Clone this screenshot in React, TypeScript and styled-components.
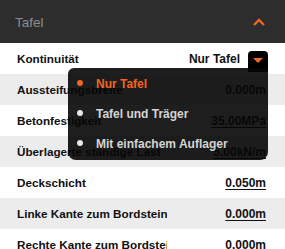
import React, {FC} from "react";
import styled, {createGlobalStyle} from "styled-components";

const GlobalStyle = createGlobalStyle`
	html, body {
		margin: 0;
		padding: 0;
		background: #ffffff;
	}
	body {
		font-family: "Liberation Sans", Arial, sans-serif;
	}
`;

interface IRow {
	label: string;
	value: string;
	link?: boolean;
}

const rows: IRow[] = [
	{label: "Aussteifungsbreite", value: "0.000m"},
	{label: "Betonfestigkeit", value: "35.00MPa", link: true},
	{label: "Überlagerte ständige Last", value: "5.00kN/m", link: true},
	{label: "Deckschicht", value: "0.050m", link: true},
	{label: "Linke Kante zum Bordstein", value: "0.000m", link: true},
	{label: "Rechte Kante zum Bordstein", value: "0.000m"}
];

const options = ["Nur Tafel", "Tafel und Träger", "Mit einfachem Auflager"];

const Panel = styled.div`
	position: relative;
	width: 285px;
	overflow: hidden;
`;

const Header = styled.div`
	height: 43px;
	background: #2d2d2d;
	display: flex;
	align-items: center;
	justify-content: space-between;
	padding: 0 20px 0 15px;
	box-sizing: border-box;
`;

const HeaderTitle = styled.span`
	color: #8c8c8c;
	font-size: 13.5px;
	padding-top: 2px;
`;

const Row = styled.div<{$shaded?: boolean}>`
	height: 31px;
	display: flex;
	align-items: center;
	justify-content: space-between;
	padding: 0 19px 0 17px;
	box-sizing: border-box;
	background: ${p => p.$shaded ? "#ececec" : "#ffffff"};
	font-size: 11.7px;
	font-weight: bold;
	color: #111111;
`;

const Label = styled.span`
	flex: 0 0 150px;
	white-space: nowrap;
	overflow: hidden;
`;

const Value = styled.span<{$link?: boolean}>`
	white-space: nowrap;
	font-size: 12px;
	text-decoration: ${p => p.$link ? "underline" : "none"};
	text-underline-offset: 2px;
`;

const SelectWrap = styled.div`
	display: flex;
	align-items: center;
	gap: 8px;
	margin-right: -2px;
`;

const SelectButton = styled.div`
	width: 20px;
	height: 21px;
	margin-top: 5px;
	background: #000000;
	border-radius: 4px 4px 0 0;
	display: flex;
	align-items: center;
	justify-content: center;
`;

const Caret = styled.div`
	width: 0;
	height: 0;
	border-left: 5px solid transparent;
	border-right: 5px solid transparent;
	border-top: 5px solid #f26522;
	margin-top: -2px;
`;

const Menu = styled.ul`
	position: absolute;
	top: 68px;
	left: 68px;
	width: 200px;
	margin: 0;
	padding: 1px 0;
	list-style: none;
	background: rgba(6, 6, 6, 0.9);
	border-radius: 6px 0 8px 8px;
`;

const MenuItem = styled.li<{$active?: boolean}>`
	height: 30px;
	display: flex;
	align-items: center;
	gap: 13px;
	padding-left: 9px;
	font-size: 12px;
	font-weight: bold;
	color: ${p => p.$active ? "#f26522" : "#d4d4d4"};
`;

const Dot = styled.span<{$active?: boolean}>`
	width: 6px;
	height: 6px;
	border-radius: 50%;
	background: ${p => p.$active ? "#f26522" : "#e8e8e8"};
	margin-top: -2px;
`;

export const App: FC = () => {
	return (
		<Panel>
			<GlobalStyle />
			<Header>
				<HeaderTitle>Tafel</HeaderTitle>
				<svg width="12" height="8" viewBox="0 0 12 8">
					<polyline points="1,7 6,2 11,7" fill="none" stroke="#f26522" strokeWidth="2.4" />
				</svg>
			</Header>
			<Row>
				<Label>Kontinuität</Label>
				<SelectWrap>
					<Value>Nur Tafel</Value>
					<SelectButton>
						<Caret />
					</SelectButton>
				</SelectWrap>
			</Row>
			{rows.map((row, i) => (
				<Row key={row.label} $shaded={i % 2 === 0}>
					<Label>{row.label}</Label>
					<Value $link={row.link}>{row.value}</Value>
				</Row>
			))}
			<Menu>
				{options.map((option, i) => (
					<MenuItem key={option} $active={i === 0}>
						<Dot $active={i === 0} />
						{option}
					</MenuItem>
				))}
			</Menu>
		</Panel>
	);
};

export default App;
